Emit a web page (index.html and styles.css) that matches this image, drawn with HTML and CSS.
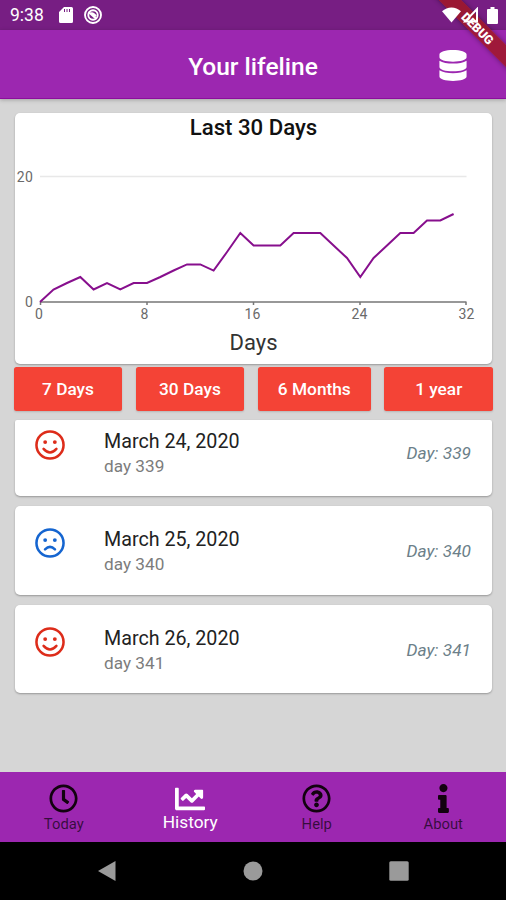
FILE: index.html
```html
<!DOCTYPE html>
<html lang="en">

<head>
    <meta charset="UTF-8" />
    <title>Your lifeline</title>
    <meta name="viewport" content="width=device-width, initial-scale=1" />
    <link rel="stylesheet" href="styles.css">
</head>

<body>
    <div class="screen">
        <div class="status-bar">
            <span class="time">9:38</span>
            <svg class="icon-sd" viewBox="0 0 14 16">
                <path d="M5 0h7.500a1.500 1.500 0 0 1 1.500 1.500v13a1.500 1.500 0 0 1-1.500 1.500h-11A1.500 1.500 0 0 1 0 14.500V5z" />
                <path class="slots" d="M5.500 2v3M8 2v3M10.500 2v3" />
            </svg>
            <svg class="icon-debug" viewBox="0 0 18 18">
                <circle cx="9" cy="9" r="8" />
                <circle cx="9" cy="9" r="4.700" />
                <path d="M4.500 6l8 7M6.500 7.500q3-1 5.500 3" />
            </svg>
            <span class="spacer"></span>
            <svg class="icon-wifi" viewBox="0 0 20 16">
                <path d="M10 16L0 4Q4.500 0 10 0t10 4z" />
            </svg>
            <svg class="icon-signal" viewBox="0 0 16 16">
                <path d="M14 2v12.500H2z" />
            </svg>
            <svg class="icon-battery" viewBox="0 0 11 17">
                <path d="M3.500 0h4v2H10a1 1 0 0 1 1 1v13a1 1 0 0 1-1 1H1a1 1 0 0 1-1-1V3a1 1 0 0 1 1-1h2.500z" />
            </svg>
        </div>

        <header class="app-bar">
            <h1>Your lifeline</h1>
            <svg class="icon-db" viewBox="0 0 448 512">
                <path d="M448 73.143v45.714C448 159.143 347.667 192 224 192S0 159.143 0 118.857V73.143C0 32.857 100.333 0 224 0s224 32.857 224 73.143zM448 176v102.857C448 319.143 347.667 352 224 352S0 319.143 0 278.857V176c48.125 33.143 136.208 48.572 224 48.572S399.874 209.143 448 176zm0 160v102.857C448 479.143 347.667 512 224 512S0 479.143 0 438.857V336c48.125 33.143 136.208 48.572 224 48.572S399.874 369.143 448 336z" />
            </svg>
        </header>
        <div class="debug-banner"><span>DEBUG</span></div>

        <main class="content">
            <section class="card chart-card">
                <h2>Last 30 Days</h2>
                <svg class="chart" viewBox="0 0 477 221">
                    <path class="grid" d="M25 33.500H451.500" />
                    <path class="axis" d="M25 159H451.500M25.500 159v3M132 159v3M238.500 159v3M345 159v3M451 159v3" />
                    <polyline class="line" points="25,159 38.500,146.500 52,140 65.300,134 78.600,146.500 92,140 105.300,146.500 118.600,140 132,140 145.300,134 158.600,127.500 172,121.400 185.300,121.400 198.600,127.600 212,109 225.300,90 238.600,102.500 252,102.500 265.300,102.500 278.600,90 292,90 305.300,90 318.600,102.500 332,115 345.300,134 358.600,115 372,102.500 385.300,90 398.600,90 412,77.500 425.300,77.500 438.600,71" />
                    <g class="labels">
                        <text x="18" y="38.500" text-anchor="end">20</text>
                        <text x="18" y="164" text-anchor="end">0</text>
                        <text x="24" y="176">0</text>
                        <text x="129.500" y="176">8</text>
                        <text x="237.500" y="176">16</text>
                        <text x="344.500" y="176">24</text>
                        <text x="451.500" y="176">32</text>
                    </g>
                    <text class="axis-title" x="238.500" y="207">Days</text>
                </svg>
            </section>

            <div class="ranges">
                <button>7 Days</button>
                <button>30 Days</button>
                <button>6 Months</button>
                <button>1 year</button>
            </div>

            <div class="list">
                <article class="card entry first">
                    <svg class="face happy" viewBox="0 0 496 496">
                        <circle cx="248" cy="248" r="224" />
                        <path d="M142 312Q248 430 354 312" />
                        <circle class="eye" cx="168" cy="200" r="32" />
                        <circle class="eye" cx="328" cy="200" r="32" />
                    </svg>
                    <div class="info">
                        <div class="date">March 24, 2020</div>
                        <div class="note">day 339</div>
                    </div>
                    <div class="day">Day: 339</div>
                </article>

                <article class="card entry">
                    <svg class="face sad" viewBox="0 0 496 496">
                        <circle cx="248" cy="248" r="224" />
                        <path d="M166 352Q248 272 330 352" />
                        <circle class="eye" cx="168" cy="200" r="32" />
                        <circle class="eye" cx="328" cy="200" r="32" />
                    </svg>
                    <div class="info">
                        <div class="date">March 25, 2020</div>
                        <div class="note">day 340</div>
                    </div>
                    <div class="day">Day: 340</div>
                </article>

                <article class="card entry">
                    <svg class="face happy" viewBox="0 0 496 496">
                        <circle cx="248" cy="248" r="224" />
                        <path d="M142 312Q248 430 354 312" />
                        <circle class="eye" cx="168" cy="200" r="32" />
                        <circle class="eye" cx="328" cy="200" r="32" />
                    </svg>
                    <div class="info">
                        <div class="date">March 26, 2020</div>
                        <div class="note">day 341</div>
                    </div>
                    <div class="day">Day: 341</div>
                </article>
            </div>
        </main>

        <nav class="tabs">
            <a class="tab">
                <svg viewBox="0 0 512 512">
                    <path d="M256 8C119 8 8 119 8 256s111 248 248 248 248-111 248-248S393 8 256 8zm0 448c-110.500 0-200-89.500-200-200S145.500 56 256 56s200 89.500 200 200-89.500 200-200 200zm61.800-104.400l-84.900-61.700c-3.100-2.300-4.900-5.900-4.900-9.700V116c0-6.600 5.400-12 12-12h32c6.600 0 12 5.400 12 12v141.700l66.800 48.600c5.400 3.900 6.500 11.400 2.600 16.800L334.600 349c-3.900 5.300-11.400 6.500-16.800 2.600z" />
                </svg>
                <span>Today</span>
            </a>
            <a class="tab active">
                <svg viewBox="0 0 512 512">
                    <path d="M496 384H64V80c0-8.840-7.160-16-16-16H16C7.160 64 0 71.160 0 80v336c0 17.670 14.330 32 32 32h464c8.840 0 16-7.160 16-16v-32c0-8.840-7.160-16-16-16zM464 96H345.940c-21.380 0-32.090 25.850-16.970 40.970l32.400 32.400L288 242.750l-73.370-73.370c-12.500-12.500-32.760-12.500-45.250 0l-68.690 68.690c-6.250 6.250-6.250 16.380 0 22.630l22.620 22.620c6.250 6.250 16.380 6.250 22.630 0L192 237.250l73.370 73.370c12.500 12.500 32.760 12.500 45.250 0l96-96 32.400 32.400c15.120 15.120 40.970 4.410 40.970-16.970V112c.01-8.840-7.150-16-15.990-16z" />
                </svg>
                <span>History</span>
            </a>
            <a class="tab">
                <svg viewBox="0 0 512 512">
                    <path d="M256 8C119.043 8 8 119.083 8 256c0 136.997 111.043 248 248 248s248-111.003 248-248C504 119.083 392.957 8 256 8zm0 448c-110.532 0-200-89.431-200-200 0-110.495 89.472-200 200-200 110.491 0 200 89.471 200 200 0 110.530-89.431 200-200 200zm107.244-255.200c0 67.052-72.421 68.084-72.421 92.863V300c0 6.627-5.373 12-12 12h-45.647c-6.627 0-12-5.373-12-12v-8.659c0-35.745 27.100-50.034 47.579-61.516 17.561-9.845 28.324-16.541 28.324-29.579 0-17.246-21.999-28.693-39.784-28.693-23.189 0-33.894 10.977-48.942 29.969-4.057 5.120-11.460 6.071-16.666 2.124l-27.824-21.098c-5.107-3.872-6.251-11.066-2.644-16.363C184.846 131.491 214.940 112 261.794 112c49.071 0 101.450 38.304 101.450 88.800zM298 368c0 23.159-18.841 42-42 42s-42-18.841-42-42 18.841-42 42-42 42 18.841 42 42z" />
                </svg>
                <span>Help</span>
            </a>
            <a class="tab">
                <svg viewBox="0 0 192 512">
                    <path d="M20 424.229h20V279.771H20c-11.046 0-20-8.954-20-20V212c0-11.046 8.954-20 20-20h112c11.046 0 20 8.954 20 20v212.229h20c11.046 0 20 8.954 20 20V492c0 11.046-8.954 20-20 20H20c-11.046 0-20-8.954-20-20v-47.771c0-11.046 8.954-20 20-20zM96 0C56.235 0 24 32.235 24 72s32.235 72 72 72 72-32.235 72-72S135.764 0 96 0z" />
                </svg>
                <span>About</span>
            </a>
        </nav>

        <div class="system-nav">
            <svg viewBox="0 0 20 22">
                <path d="M18.500 1v20L1 11z" />
            </svg>
            <svg viewBox="0 0 20 22">
                <circle cx="10" cy="11" r="9.500" />
            </svg>
            <svg viewBox="0 0 20 22">
                <rect x="0.300" y="1.300" width="19.400" height="19.400" rx="1.500" />
            </svg>
        </div>
    </div>
</body>

</html>
```
FILE: styles.css
```css
body {
    margin: 0;
    font-family: Roboto, "Liberation Sans", sans-serif;
    background: #000;
}

.screen {
    position: relative;
    display: flex;
    flex-direction: column;
    width: 506px;
    height: 900px;
    overflow: hidden;
    background: #d6d6d6;
}

/* Status bar */
.status-bar {
    display: flex;
    align-items: center;
    height: 30px;
    padding: 0 8px 0 10px;
    box-sizing: border-box;
    background: #771e83;
    color: #fff;
}

.time {
    width: 49px;
    font-size: 17.5px;
    line-height: 30px;
}

/* System icons stay above the debug banner */
.status-bar svg {
    position: relative;
    z-index: 2;
    fill: #fff;
}

.spacer {
    flex: 1;
}

.icon-sd {
    width: 14px;
    height: 16px;
    margin-right: 11px;
}

.icon-sd .slots {
    stroke: #771e83;
    stroke-width: 1;
}

.status-bar .icon-debug {
    width: 18px;
    height: 18px;
    fill: none;
    stroke: #fff;
    stroke-width: 1.9;
}

.icon-wifi {
    width: 19px;
    height: 16px;
}

.status-bar .icon-signal {
    width: 16px;
    height: 16px;
    margin: 0 8px 0 2px;
    fill: none;
    stroke: #fff;
    stroke-width: 2;
}

.icon-battery {
    width: 11px;
    height: 17px;
}

/* App bar */
.app-bar {
    position: relative;
    display: grid;
    grid-template-columns: 1fr auto 1fr;
    align-items: center;
    height: 69px;
    padding: 2px 39px 0;
    box-sizing: border-box;
    border-bottom: 1px solid #8c0d9d;
    background: #9c27b0;
    color: #fff;
    box-shadow: 0 1px 4px rgba(0, 0, 0, 0.25);
}

.app-bar h1 {
    grid-column: 2;
    margin: 2px 0 0;
    font-size: 24.5px;
    font-weight: 500;
}

.icon-db {
    justify-self: end;
    width: 28px;
    height: 31px;
    fill: #fff;
}

.debug-banner {
    position: absolute;
    z-index: 1;
    top: 20px;
    left: 418px;
    width: 120px;
    height: 16px;
    line-height: 19px;
    transform: rotate(45deg);
    background: rgba(160, 24, 38, 0.85);
    box-shadow: 0 0 5px rgba(0, 0, 0, 0.4);
    color: #fff;
    font-size: 12.3px;
    font-weight: 900;
    text-align: center;
}

/* History page */
.content {
    flex: 1;
    padding: 14px 14px 0;
}

.card {
    margin: 0 0 10px 1px;
    width: 477px;
    border-radius: 5px;
    background: #fff;
    box-shadow: 0 1px 2px rgba(0, 0, 0, 0.3);
}

.chart-card {
    height: 251px;
    margin-bottom: 3px;
}

.chart-card h2 {
    margin: 0;
    height: 30px;
    font-size: 22.2px;
    font-weight: 500;
    line-height: 29px;
    text-align: center;
    color: #111;
}

.chart {
    display: block;
    width: 477px;
    height: 221px;
}

.grid {
    stroke: #e8e8e8;
    stroke-width: 1.3;
}

.axis {
    fill: none;
    stroke: #777;
    stroke-width: 1.5;
}

.line {
    fill: none;
    stroke: #870f8d;
    stroke-width: 2;
}

.labels text {
    fill: #6a6a6a;
    font-size: 14px;
    letter-spacing: 0.2px;
    text-anchor: middle;
}

.labels text[text-anchor="end"] {
    text-anchor: end;
}

.axis-title {
    fill: #333;
    font-size: 22px;
    text-anchor: middle;
}

.ranges {
    display: grid;
    grid-template-columns: 108px 108.5px 113px 108.5px;
    justify-content: space-between;
    width: 479px;
    margin-bottom: 9px;
}

.ranges button {
    height: 44px;
    padding: 0;
    border: none;
    border-radius: 2.5px;
    background: #f44336;
    color: #fff;
    font-family: inherit;
    font-size: 17.3px;
    font-weight: 500;
    box-shadow: 0 1px 2px rgba(0, 0, 0, 0.15);
}

.entry {
    display: flex;
    align-items: flex-start;
    height: 88.5px;
    padding: 22px 21px 0 20px;
    box-sizing: border-box;
}

.entry.first {
    height: 76px;
    padding-top: 10px;
    border-radius: 2px 2px 5px 5px;
}

.face {
    width: 30px;
    height: 30px;
    margin-right: 39px;
    fill: none;
    stroke: currentColor;
    stroke-width: 42;
    stroke-linecap: round;
}

.face .eye {
    fill: currentColor;
    stroke: none;
}

.happy {
    color: #dd2c1a;
}

.sad {
    color: #1565d0;
}

.info {
    flex: 1;
}

.date {
    font-size: 19.7px;
    line-height: 24px;
    color: #222;
}

.note {
    margin-top: 1px;
    font-size: 17.2px;
    line-height: 22px;
    color: #7c7c7c;
}

.day {
    margin-top: 12px;
    font-size: 17.3px;
    font-style: italic;
    line-height: 22px;
    color: #6c7f89;
}

/* Bottom tabs */
.tabs {
    display: grid;
    grid-template-columns: repeat(4, 1fr);
    height: 70px;
    background: #9c27b0;
}

.tab {
    display: flex;
    flex-direction: column;
    align-items: center;
    padding: 12px 0 0 1px;
    color: rgba(0, 0, 0, 0.66);
    font-size: 14.8px;
    line-height: 18px;
}

.tab svg {
    height: 29px;
    margin-bottom: 2px;
    fill: #12020f;
}

.tab.active {
    color: #fff;
    font-size: 17.3px;
}

.tab.active svg {
    height: 30px;
    margin-bottom: -1px;
    fill: #fff;
}

.system-nav {
    display: flex;
    justify-content: center;
    gap: 126px;
    height: 58px;
    padding-top: 18px;
    box-sizing: border-box;
    background: #000;
}

.system-nav svg {
    width: 20px;
    height: 22px;
    fill: #9a9a9a;
}
```
